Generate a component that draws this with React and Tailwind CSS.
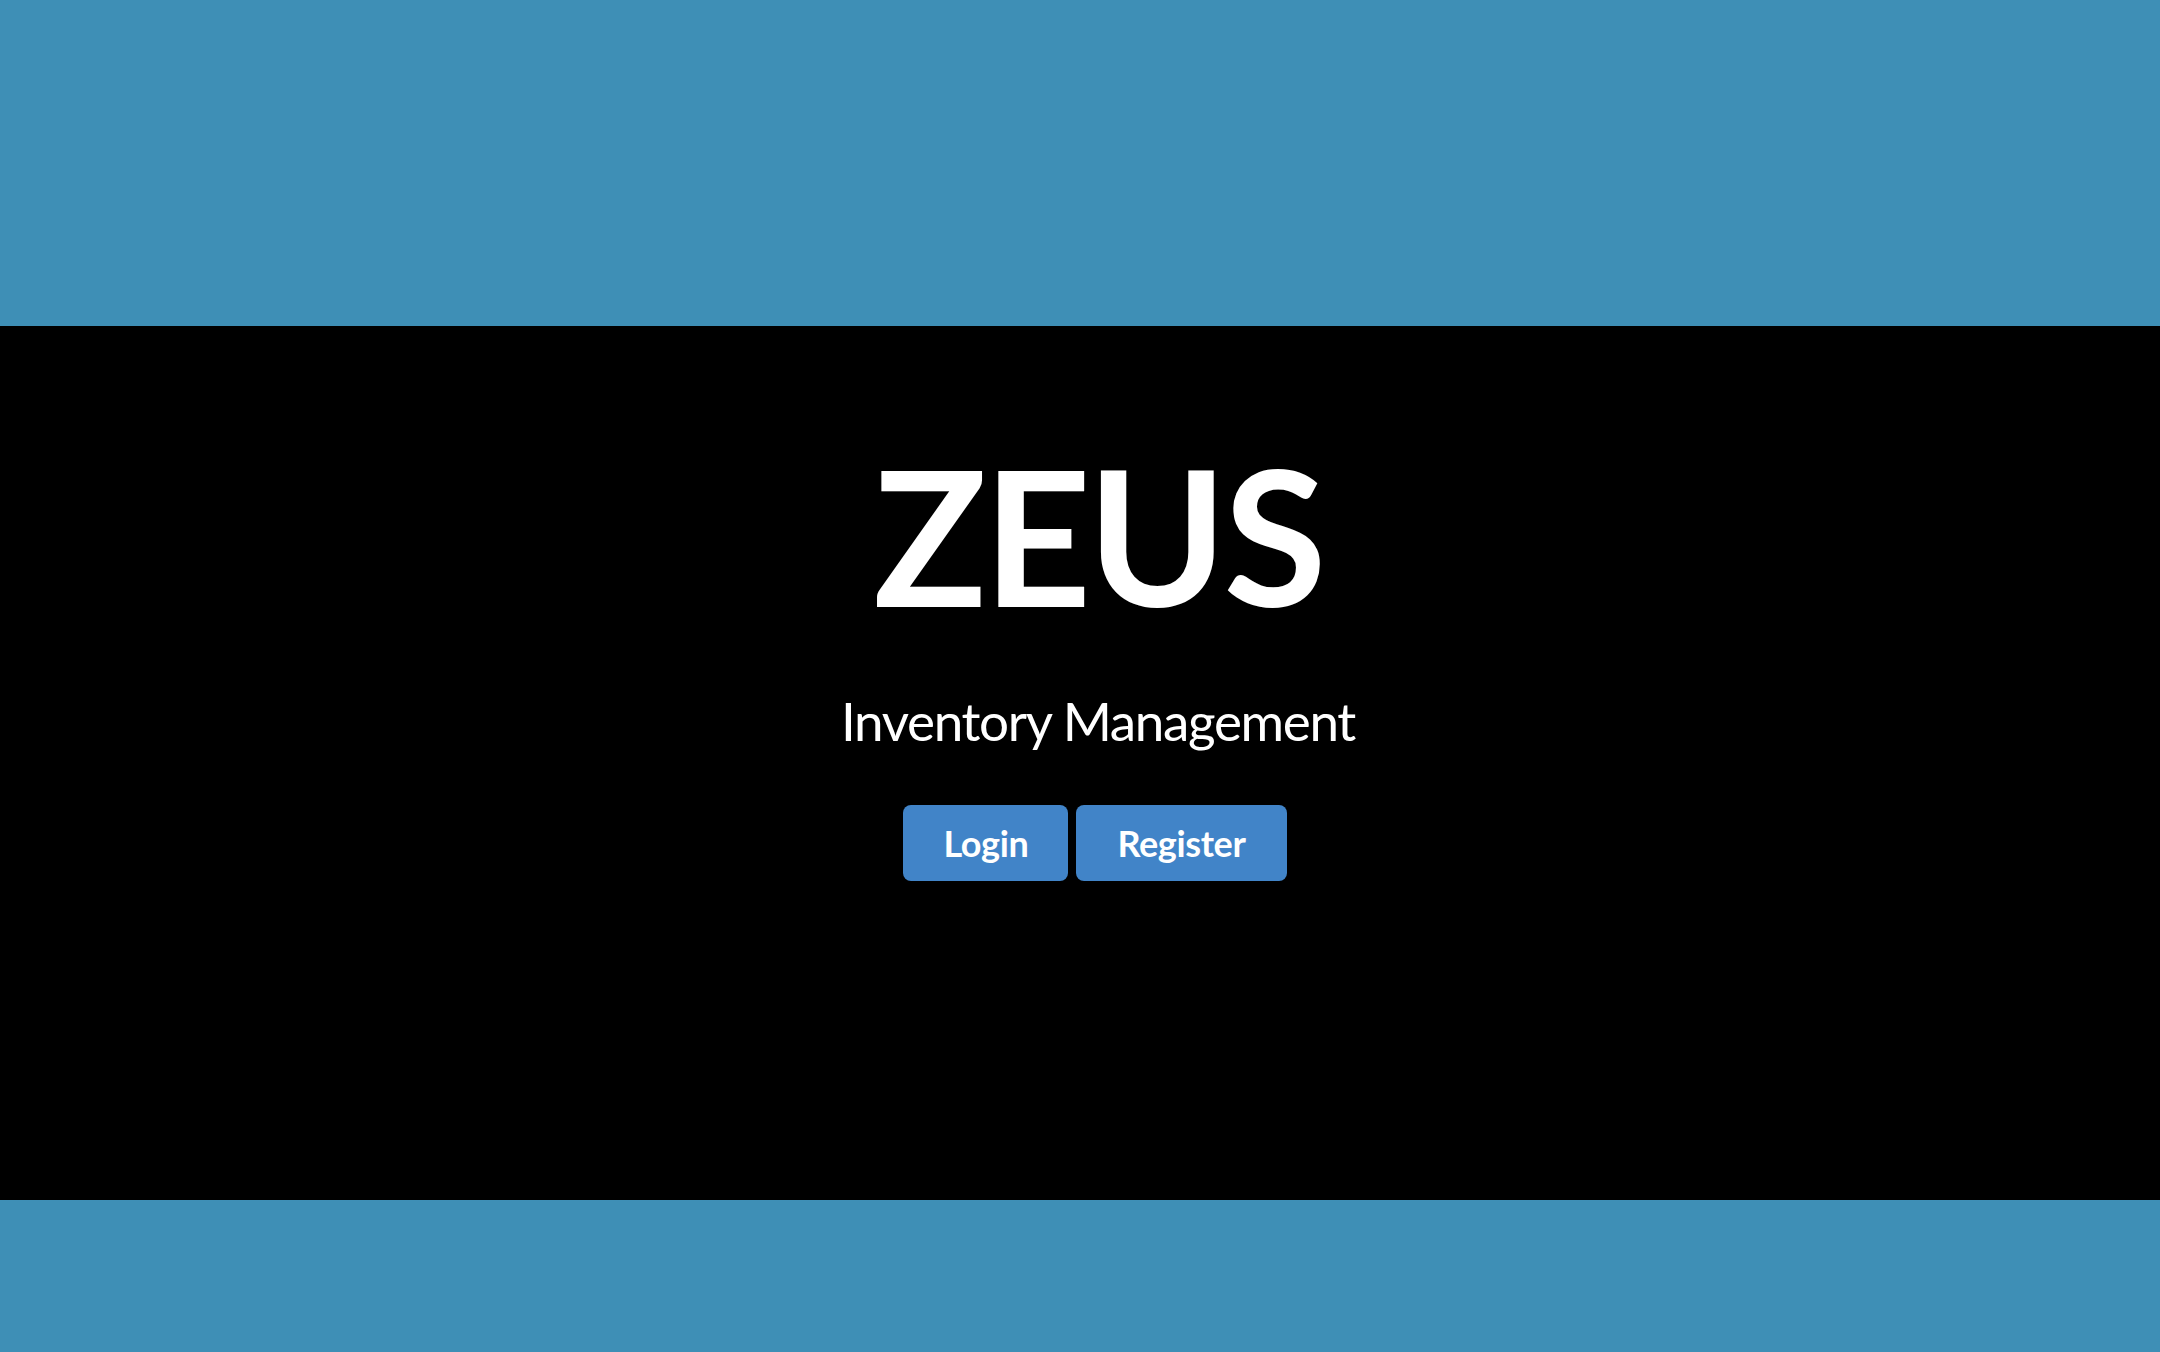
export default function App() {
  return (
    <div className="flex h-[1352px] w-full flex-col font-['Lato',sans-serif]">
      <div className="h-[326px] bg-[#3e8fb6]" />
      <div className="flex flex-1 flex-col items-center bg-black pl-[36px] pt-[114px] text-white">
        <h1 className="text-[188px] font-bold leading-none tracking-[-0.02em]">ZEUS</h1>
        <p className="mt-[66px] text-[53px] leading-none tracking-[-0.025em]">Inventory Management</p>
        <div className="mr-[6px] mt-[58px] flex gap-2">
          <button className="rounded-lg bg-[#4184c8] px-[40px] py-5 text-[36px] font-bold leading-none tracking-[-0.01em] text-white">
            Login
          </button>
          <button className="rounded-lg bg-[#4184c8] px-[41px] py-5 text-[36px] font-bold leading-none tracking-[-0.01em] text-white">
            Register
          </button>
        </div>
      </div>
      <div className="h-[152px] bg-[#3e8fb6]" />
    </div>
  );
}
